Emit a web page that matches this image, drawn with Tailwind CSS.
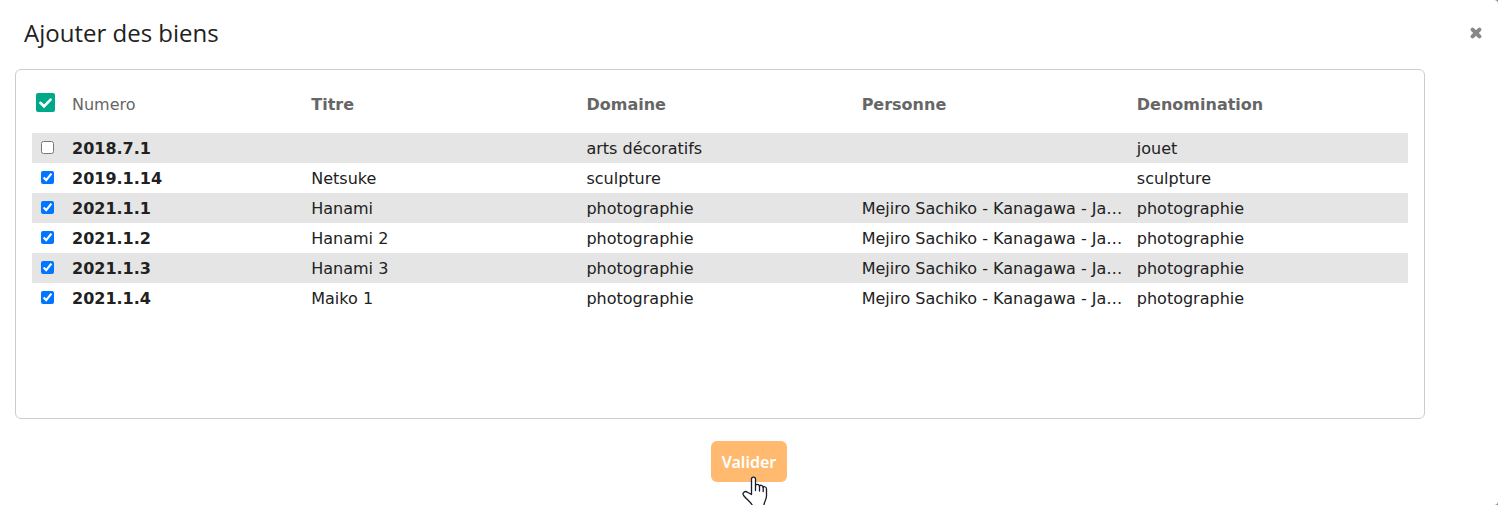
<!DOCTYPE html>
<html lang="fr">
<head>
<meta charset="utf-8">
<title>Ajouter des biens</title>
<script src="https://cdn.jsdelivr.net/npm/@tailwindcss/browser@4"></script>
</head>
<body class="bg-[#8a8a8a] overflow-hidden">
<section role="dialog" aria-labelledby="title" class="h-screen overflow-hidden rounded-r-[4px] bg-white text-[#212121] font-['Verdana','DejaVu_Sans',sans-serif]">
  <header class="flex items-center justify-between pt-[15px] pl-6 pr-4">
    <h1 id="title" class="text-2xl leading-9 font-['Segoe_UI','Open_Sans',sans-serif]">Ajouter des biens</h1>
    <button type="button" aria-label="Fermer" class="p-0 text-[#888]">
      <svg class="block size-3" viewBox="0 0 12 12" fill="none" stroke="currentColor" stroke-width="4" stroke-linecap="round"><path d="M2.600 2.600l6.800 6.800M9.400 2.600l-6.800 6.800"/></svg>
    </button>
  </header>
  <div class="mt-[18px] ml-[15px] mr-[73px] min-h-[350px] rounded-md border border-[#ccc] px-4 pt-[6px]">
    <table class="w-full table-fixed border-collapse text-left text-base">
      <colgroup><col class="w-9"><col><col class="w-1/5"><col class="w-1/5"><col class="w-1/5"><col class="w-1/5"></colgroup>
      <thead class="text-[#666]">
        <tr class="h-[57px]">
          <th class="pl-1 pb-1"><input type="checkbox" checked aria-label="Tout sélectionner" class="peer sr-only" id="all"><label for="all" class="flex size-[19px] items-center justify-center rounded-[2px] bg-[#00a88a]"><svg class="size-[15px]" viewBox="0 0 15 15" fill="none" stroke="#fff" stroke-width="2.6" stroke-linecap="round"><path d="M2.400 7.800l3.600 3.500 6.600-6.600"/></svg></label></th>
          <th class="px-1 font-normal">Numero</th><th class="px-1">Titre</th><th class="px-1">Domaine</th><th class="px-1">Personne</th><th class="px-1">Denomination</th>
        </tr>
      </thead>
      <tbody id="rows"></tbody>
    </table>
  </div>
  <footer class="mt-[22px] flex justify-center">
    <div class="relative">
      <button type="button" class="h-[41px] rounded-md bg-[#ffba70] px-[11px] text-base font-semibold text-white font-['Noto_Sans',sans-serif]">Valider</button>
      <svg class="pointer-events-none absolute left-[31px] top-[35px] h-[34px] w-[26px]" viewBox="0 0 26 34" fill="#fff" stroke="#1a1a2a" stroke-width="1.3" stroke-linejoin="round" stroke-linecap="round"><path d="M9.500 18.500V3C9.500 .4 13.500 .4 13.500 3V10C13.500 7.700 17.500 8 17.500 10.500C17.500 8.500 21.200 9 21.200 11.500C21.200 10 24.500 10.500 24.500 13V20C24.500 24 21.800 26 21.800 30V33H10.500V30C10.500 27.500 5.500 24.500 1.600 19.500C-.2 16.800 3 14.300 5.500 16.300Z"/><path d="M13.500 10v4.500M17.500 10.500v4.500M21.200 11.500v4"/></svg>
    </div>
  </footer>
</section>
<script>
const data = [
  ['2018.7.1', '', 'arts décoratifs', '', 'jouet'],
  ['2019.1.14', 'Netsuke', 'sculpture', '', 'sculpture'],
  ['2021.1.1', 'Hanami', 'photographie', 'Mejiro Sachiko - Kanagawa - Ja…', 'photographie'],
  ['2021.1.2', 'Hanami 2', 'photographie', 'Mejiro Sachiko - Kanagawa - Ja…', 'photographie'],
  ['2021.1.3', 'Hanami 3', 'photographie', 'Mejiro Sachiko - Kanagawa - Ja…', 'photographie'],
  ['2021.1.4', 'Maiko 1', 'photographie', 'Mejiro Sachiko - Kanagawa - Ja…', 'photographie']
];
document.getElementById('rows').innerHTML = data.map((r, i) => `<tr class="h-[30px] odd:bg-[#e5e5e5]">
  <td class="pl-[9px] pb-[2px]"><input type="checkbox" aria-label="${r[0]}" ${i ? 'checked' : ''} class="block size-[13px]"></td>
  ${r.map((t, c) => `<td class="truncate px-1 pt-[2px] ${c ? '' : 'font-bold'}">${t}</td>`).join('')}</tr>`).join('');
</script>
</body>
</html>
